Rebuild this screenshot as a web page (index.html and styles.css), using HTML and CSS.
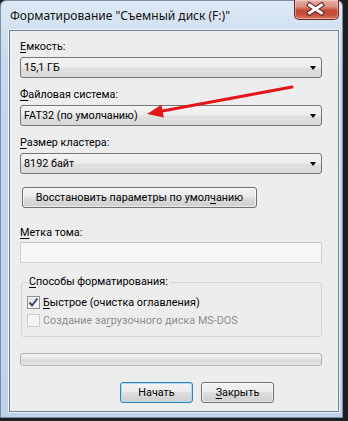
FILE: index.html
```html
<!DOCTYPE html>
<html lang="ru">
<head>
<meta charset="utf-8">
<title>Форматирование</title>
<link rel="stylesheet" href="styles.css">
</head>
<body>
<div class="window">
  <div class="titlebar">
    <span class="title">Форматирование "Съемный диск (F:)"</span>
    <div class="close">
      <svg width="45" height="20" viewBox="0 0 45 20">
        <path d="M16.5 5 L28.5 13 M28.5 5 L16.5 13" stroke="#5a1f18" stroke-width="5" stroke-linecap="square" fill="none"/>
        <path d="M16.5 5 L28.5 13 M28.5 5 L16.5 13" stroke="#ffffff" stroke-width="3" stroke-linecap="square" fill="none"/>
      </svg>
    </div>
  </div>
  <div class="client">
    <div class="label"><u>Е</u>мкость:</div>
    <div class="combo"><span>15,1 ГБ</span><i class="arrow"></i></div>

    <div class="label label-gap"><u>Ф</u>айловая система:</div>
    <div class="combo"><span>FAT32 (по умолчанию)</span><i class="arrow"></i></div>

    <div class="label label-gap"><u>Р</u>азмер кластера:</div>
    <div class="combo"><span>8192 байт</span><i class="arrow"></i></div>

    <div class="btn btn-restore">Восстановить параметры по умол<u>ч</u>анию</div>

    <div class="label label-gap2"><u>М</u>етка тома:</div>
    <div class="textbox"></div>

    <fieldset class="group">
      <legend><u>С</u>пособы форматирования:</legend>
      <div class="check-row">
        <span class="checkbox checked">
          <svg width="11" height="11" viewBox="0 0 11 11"><path d="M1.5 5.5 L4 8.5 L9.5 1.5" stroke="#34476f" stroke-width="2" fill="none"/></svg>
        </span>
        <span><u>Б</u>ыстрое (очистка оглавления)</span>
      </div>
      <div class="check-row disabled">
        <span class="checkbox"></span>
        <span>Создание за<u>г</u>рузочного диска MS-DOS</span>
      </div>
    </fieldset>

    <div class="progress"></div>

    <div class="actions">
      <div class="btn btn-default">Начать</div>
      <div class="btn"><u>З</u>акрыть</div>
    </div>
  </div>
  <svg class="annot" width="348" height="421" viewBox="0 0 348 421">
    <line x1="292" y1="87" x2="161" y2="111.3" stroke="#e3171b" stroke-width="3" stroke-linecap="round"/>
    <polygon points="147,114 163.8,117.5 161.4,104.8" fill="#e3171b"/>
  </svg>
</div>
</body>
</html>
```

FILE: styles.css
```css
html, body {
  margin: 0;
  padding: 0;
}
body {
  width: 348px;
  height: 421px;
  overflow: hidden;
  background: #1d1f22;
  font-family: Roboto, "Noto Sans", sans-serif;
  font-size: 10.8px;
  color: #000;
}
u {
  text-decoration: underline;
  text-underline-offset: 2px;
}
.window {
  position: relative;
  width: 343px;
  height: 418px;
  box-sizing: border-box;
  border: 1px solid #7d8fa3;
  border-radius: 6px 6px 0 0;
  background: linear-gradient(to bottom, #dfe9f5 0, #d2e1f1 28px, #c4d8ee 60px, #bcd3eb 100%);
  display: flex;
  flex-direction: column;
}
.titlebar {
  height: 29px;
  flex: none;
  display: flex;
  align-items: flex-start;
  justify-content: space-between;
  padding: 0 3px 0 9px;
}
.title {
  margin-top: 7px;
  line-height: 16px;
  font-family: "Noto Sans", sans-serif;
  font-size: 12px;
  color: #111;
  white-space: nowrap;
}
.close {
  width: 45px;
  height: 20px;
  margin-top: -1px;
  box-sizing: border-box;
  border: 1px solid #6b2b22;
  border-top: none;
  border-radius: 0 0 5px 5px;
  background: linear-gradient(to bottom, #e8b2a6 0, #d98f80 35%, #c44a38 55%, #c9503f 80%, #dc7f6c 100%);
  box-shadow: inset 0 0 0 1px rgba(255, 220, 210, 0.45);
  display: flex;
  align-items: center;
  justify-content: center;
}
.close svg {
  display: block;
  margin-left: -2px;
}
.client {
  flex: 1;
  margin: 0 3px 5px 8px;
  box-sizing: border-box;
  border: 1px solid #6f8194;
  box-shadow: 0 0 0 1px #eef4fa;
  background: #ededed;
  display: flex;
  flex-direction: column;
  padding: 8px 16px 0 10px;
}
.label {
  line-height: 16px;
  height: 16px;
  white-space: nowrap;
}
.label-gap {
  margin-top: 9px;
}
.label-gap2 {
  margin-top: 17px;
}
.combo {
  margin-top: 2px;
  height: 21px;
  box-sizing: border-box;
  border: 1px solid #767676;
  border-radius: 3px;
  background: linear-gradient(to bottom, #f5f5f5 0, #ececec 48%, #e0e0e0 52%, #d8d8d8 100%);
  display: flex;
  align-items: center;
  justify-content: space-between;
  padding: 0 5px 0 3px;
}
.combo span {
  line-height: 16px;
}
.arrow {
  width: 0;
  height: 0;
  border-left: 3.5px solid transparent;
  border-right: 3.5px solid transparent;
  border-top: 4px solid #000;
}
.btn {
  height: 21px;
  box-sizing: border-box;
  border: 1px solid #707070;
  border-radius: 3px;
  background: linear-gradient(to bottom, #f3f3f3 0, #ebebeb 45%, #dddddd 52%, #cfcfcf 100%);
  box-shadow: inset 0 0 0 1px rgba(255, 255, 255, 0.6);
  display: flex;
  align-items: center;
  justify-content: center;
  line-height: 16px;
  white-space: nowrap;
}
.btn-restore {
  width: 235px;
  margin: 13px 0 0 2px;
}
.textbox {
  margin-top: 1px;
  height: 21px;
  box-sizing: border-box;
  border: 1px solid #d0d0d0;
  border-top-color: #c4c4c4;
  border-radius: 2px;
  background: #f6f6f6;
}
.group {
  margin: 11px 0 0 1px;
  padding: 3px 5px 7px;
  border: 1px solid #d2d6da;
  border-radius: 3px;
  min-inline-size: 0;
}
.group legend {
  padding: 0 2px;
  margin-left: 0;
  line-height: 16px;
}
.check-row {
  height: 18px;
  display: flex;
  align-items: center;
  gap: 3px;
  white-space: nowrap;
}
.check-row.disabled {
  color: #8d8d8d;
}
.checkbox {
  width: 13px;
  height: 13px;
  box-sizing: border-box;
  border: 1px solid #8e8f8f;
  background: linear-gradient(135deg, #dcdcdc 0, #f2f2f2 60%, #ffffff 100%);
  box-shadow: inset 0 0 0 1px #f4f4f4;
  display: flex;
  align-items: center;
  justify-content: center;
}
.checkbox svg {
  display: block;
}
.disabled .checkbox {
  border-color: #cdcdcd;
  background: #f4f4f4;
  box-shadow: none;
}
.progress {
  margin-top: 16px;
  height: 13px;
  box-sizing: border-box;
  border: 1px solid #b4b4b4;
  border-radius: 3px;
  background: linear-gradient(to bottom, #f4f4f4 0, #e6e6e6 45%, #d9d9d9 55%, #e4e4e4 100%);
}
.actions {
  margin-top: 16px;
  display: flex;
  gap: 8px;
  padding-left: 100px;
}
.actions .btn {
  width: 73px;
}
.btn-default {
  border-color: #3c7fb1;
  box-shadow: inset 0 0 0 1px #a9dcf5;
}
.annot {
  position: absolute;
  left: -1px;
  top: -1px;
  pointer-events: none;
}
```
